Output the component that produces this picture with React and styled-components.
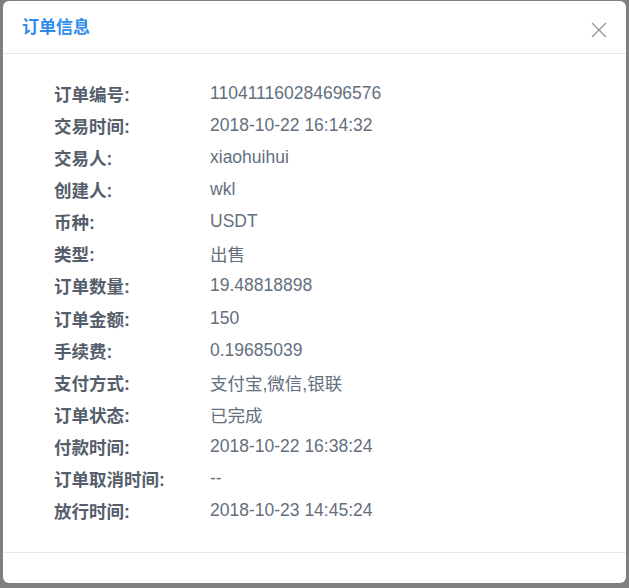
import React from 'react';
import styled, { createGlobalStyle } from 'styled-components';

const rows = [
	['订单编号:', '110411160284696576'],
	['交易时间:', '2018-10-22 16:14:32'],
	['交易人:', 'xiaohuihui'],
	['创建人:', 'wkl'],
	['币种:', 'USDT'],
	['类型:', '出售'],
	['订单数量:', '19.48818898'],
	['订单金额:', '150'],
	['手续费:', '0.19685039'],
	['支付方式:', '支付宝,微信,银联'],
	['订单状态:', '已完成'],
	['付款时间:', '2018-10-22 16:38:24'],
	['订单取消时间:', '--'],
	['放行时间:', '2018-10-23 14:45:24'],
];

export default function App() {
	return (
		<>
			<GlobalStyle />
			<Overlay>
				<Dialog>
					<Header>
						<Title>订单信息</Title>
						<CloseButton aria-label="close">
							<svg width="16" height="16" viewBox="0 0 16 16">
								<path d="M1 1L15 15M15 1L1 15" stroke="#909399" strokeWidth="1.3" fill="none" />
							</svg>
						</CloseButton>
					</Header>
					<Body>
						{rows.map(([label, value]) => (
							<React.Fragment key={label}>
								<Label>{label}</Label>
								<Value>{value}</Value>
							</React.Fragment>
						))}
					</Body>
					<Footer />
				</Dialog>
			</Overlay>
		</>
	);
}

const GlobalStyle = createGlobalStyle`
	html, body {
		margin: 0;
		padding: 0;
		background: #7f7f7f;
	}
	body {
		font-family: "Liberation Sans", "Noto Sans CJK SC", sans-serif;
	}
`;

const Overlay = styled.div`
	width: 629px;
	height: 588px;
	background: #7f7f7f;
	padding: 1px 0 0 3px;
	box-sizing: border-box;
	overflow: hidden;
`;

const Dialog = styled.div`
	width: 623px;
	height: 582px;
	background: #fff;
	border-radius: 6px;
	display: flex;
	flex-direction: column;
	overflow: hidden;
`;

const Header = styled.div`
	height: 52px;
	border-bottom: 1px solid #e4e7ed;
	display: flex;
	align-items: center;
	justify-content: space-between;
	padding: 0 19px 0 19px;
	flex-shrink: 0;
`;

const Title = styled.h2`
	margin: 0 0 3px;
	font-size: 17px;
	font-weight: bold;
	color: #2f8cee;
`;

const CloseButton = styled.button`
	border: none;
	background: transparent;
	padding: 0;
	margin-top: 6px;
	width: 16px;
	height: 16px;
	display: flex;
	cursor: pointer;
`;

const Body = styled.div`
	flex: 1;
	display: grid;
	grid-template-columns: 156px 1fr;
	grid-auto-rows: 32.15px;
	align-items: center;
	align-content: start;
	padding: 23px 0 0 51px;
`;

const Label = styled.div`
	font-size: 17.5px;
	font-weight: bold;
	color: #555e6b;
`;

const Value = styled.div`
	font-size: 17.5px;
	color: #646f7d;
`;

const Footer = styled.div`
	height: 30px;
	border-top: 1px solid #e4e7ed;
	flex-shrink: 0;
`;
